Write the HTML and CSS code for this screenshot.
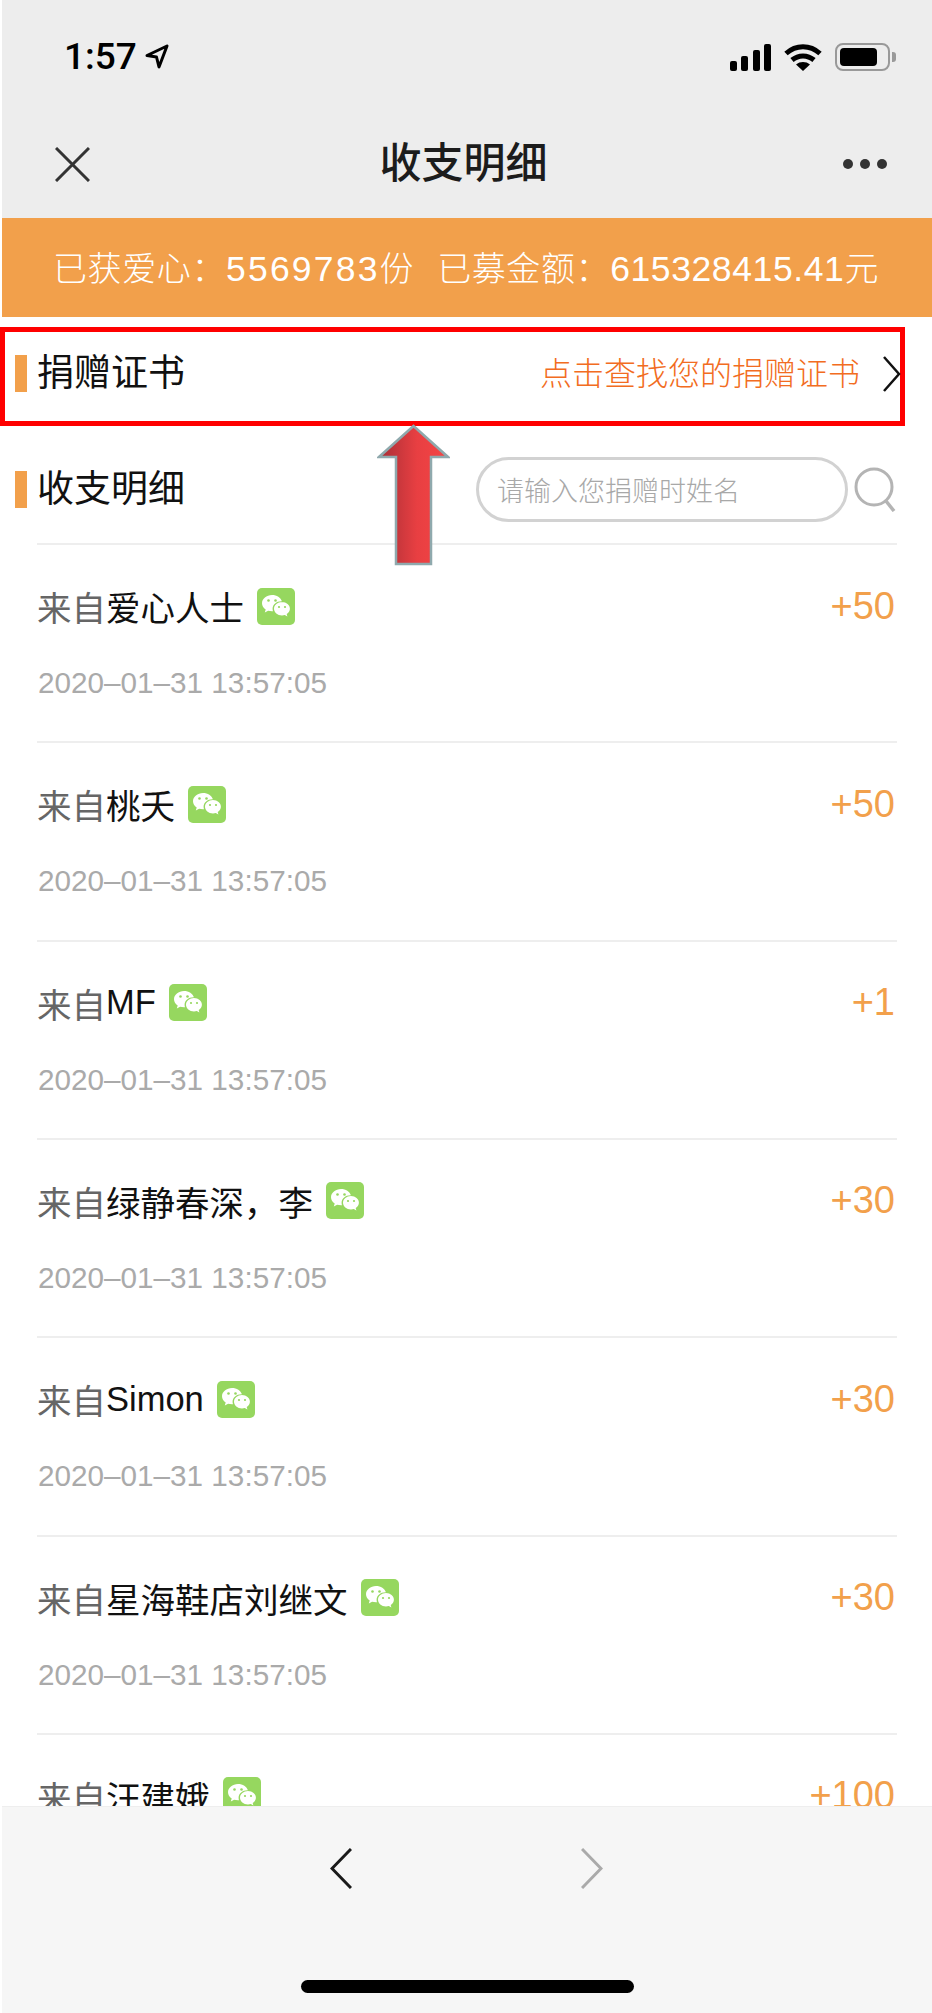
FILE: index.html
```html
<!DOCTYPE html>
<html lang="zh-CN">
<head>
  <meta charset="UTF-8">
  <meta name="viewport" content="width=device-width, initial-scale=1.0">
  <title>收支明细</title>
  <link rel="stylesheet" href="styles.css">
</head>

<body>
  <svg class="defs" width="0" height="0">
    <symbol id="wechat" viewBox="0 0 38 37">
      <rect width="38" height="37" rx="5" fill="#96d75f"/>
      <path d="M15 7c-5.500 0-10 3.700-10 8.200 0 2.600 1.400 4.800 3.700 6.300l-.9 2.900 3.300-1.700c1.200.3 2.500.5 3.900.5h1c-.3-.9-.4-1.700-.4-2.500 0-4.200 3.900-7.500 8.800-7.500h.5C23.800 9.700 19.800 7 15 7z" fill="#fff"/>
      <path d="M25 14c-4.400 0-8 3-8 6.700s3.600 6.700 8 6.700c1 0 1.900-.2 2.800-.4l2.600 1.400-.7-2.400c1.900-1.300 3.200-3.300 3.200-5.300 0-3.700-3.500-6.700-7.900-6.700z" fill="#fff"/>
      <g fill="#96d75f">
        <circle cx="11.500" cy="12.500" r="1.300"/>
        <circle cx="18.500" cy="12.500" r="1.300"/>
        <circle cx="22" cy="19" r="1.100"/>
        <circle cx="28" cy="19" r="1.100"/>
      </g>
    </symbol>
  </svg>

  <div class="page">
    <header class="top">
      <div class="status">
        <div class="clock">
          <span>1:57</span>
          <svg class="loc" width="24" height="25" viewBox="0 0 24 25"><path d="M22 2 2 11.500l9.500 1.500 2.500 10z" fill="none" stroke="#000" stroke-width="3" stroke-linejoin="round"/></svg>
        </div>
        <div class="status-icons">
          <svg width="41" height="27" viewBox="0 0 41 27">
            <rect x="0" y="17" width="7" height="10" rx="2"/>
            <rect x="11" y="12" width="7" height="15" rx="2"/>
            <rect x="23" y="6" width="7" height="21" rx="2"/>
            <rect x="34" y="0" width="7" height="27" rx="2"/>
          </svg>
          <svg width="38" height="27" viewBox="0 0 38 27">
            <path d="M2 9.500c10-9 24-9 34 0M8 16c6.500-5.500 15.500-5.500 22 0" fill="none" stroke="#000" stroke-width="5"/>
            <path d="M19 27 12 20.500c4-3.300 10-3.300 14 0z"/>
          </svg>
          <div class="battery"><div class="battery-fill"></div></div>
          <div class="battery-nub"></div>
        </div>
      </div>
      <nav class="nav">
        <svg class="nav-close" width="35" height="35" viewBox="0 0 35 35"><path d="M1 1l33 33M34 1 1 34" stroke="#333" stroke-width="3" fill="none"/></svg>
        <h1 class="nav-title">收支明细</h1>
        <div class="nav-more"><i></i><i></i><i></i></div>
      </nav>
    </header>

    <div class="banner">
      <span>已获爱心：<b class="num num-a">5569783</b>份</span>
      <span>已募金额：<b class="num">615328415.41</b>元</span>
    </div>

    <a class="cert">
      <span class="mark"></span>
      <span class="head-title">捐赠证书</span>
      <span class="cert-link">点击查找您的捐赠证书</span>
      <svg class="cert-arrow" width="18" height="36" viewBox="0 0 18 36"><path d="M1 1l15 17L1 35" fill="none" stroke="#111" stroke-width="2.500"/></svg>
    </a>

    <div class="list-head">
      <span class="mark"></span>
      <span class="head-title">收支明细</span>
      <div class="search-box">请输入您捐赠时姓名</div>
      <svg class="search-icon" width="42" height="45" viewBox="0 0 42 45">
        <circle cx="20" cy="20" r="18" fill="none" stroke="#b4b4b4" stroke-width="3"/>
        <path d="M32 34l8 10" stroke="#b4b4b4" stroke-width="3.500" fill="none"/>
      </svg>
    </div>

    <ul class="list">
      <li class="row">
        <div class="row-main">
          <span class="from">来自</span><span class="name">爱心人士</span>
          <svg class="wx"><use href="#wechat"/></svg>
          <span class="amount">+50</span>
        </div>
        <div class="date">2020–01–31 13:57:05</div>
      </li>
      <li class="row">
        <div class="row-main">
          <span class="from">来自</span><span class="name">桃夭</span>
          <svg class="wx"><use href="#wechat"/></svg>
          <span class="amount">+50</span>
        </div>
        <div class="date">2020–01–31 13:57:05</div>
      </li>
      <li class="row">
        <div class="row-main">
          <span class="from">来自</span><span class="name">MF</span>
          <svg class="wx"><use href="#wechat"/></svg>
          <span class="amount">+1</span>
        </div>
        <div class="date">2020–01–31 13:57:05</div>
      </li>
      <li class="row">
        <div class="row-main">
          <span class="from">来自</span><span class="name">绿静春深，李</span>
          <svg class="wx"><use href="#wechat"/></svg>
          <span class="amount">+30</span>
        </div>
        <div class="date">2020–01–31 13:57:05</div>
      </li>
      <li class="row">
        <div class="row-main">
          <span class="from">来自</span><span class="name">Simon</span>
          <svg class="wx"><use href="#wechat"/></svg>
          <span class="amount">+30</span>
        </div>
        <div class="date">2020–01–31 13:57:05</div>
      </li>
      <li class="row">
        <div class="row-main">
          <span class="from">来自</span><span class="name">星海鞋店刘继文</span>
          <svg class="wx"><use href="#wechat"/></svg>
          <span class="amount">+30</span>
        </div>
        <div class="date">2020–01–31 13:57:05</div>
      </li>
      <li class="row">
        <div class="row-main">
          <span class="from">来自</span><span class="name">汪建娥</span>
          <svg class="wx"><use href="#wechat"/></svg>
          <span class="amount">+100</span>
        </div>
        <div class="date">2020–01–31 13:57:05</div>
      </li>
    </ul>

    <footer class="toolbar">
      <div class="toolbar-btns">
        <svg width="22" height="41" viewBox="0 0 22 41"><path d="M21 1 2 20.500 21 40" fill="none" stroke="#1a1a1a" stroke-width="3"/></svg>
        <svg width="22" height="41" viewBox="0 0 22 41"><path d="M1 1l19 19.500L1 40" fill="none" stroke="#aaa" stroke-width="3"/></svg>
      </div>
      <div class="home-bar"></div>
    </footer>

    <!-- callout pointing up at the certificate row -->
    <svg class="callout" width="73" height="143" viewBox="0 0 73 143">
      <defs>
        <linearGradient id="calloutFill" x1="0" x2="1" y1="0" y2="0">
          <stop offset="0" stop-color="#a82f36"/>
          <stop offset=".55" stop-color="#e83f42"/>
          <stop offset="1" stop-color="#f54545"/>
        </linearGradient>
      </defs>
      <path d="M36.500 2 71 33H54v107H19V33H2z" fill="url(#calloutFill)" stroke="#8fa9ad" stroke-width="2.500"/>
    </svg>
  </div>
</body>

</html>
```

FILE: styles.css
```css
*{
  box-sizing: border-box;
}
html,body{
  margin: 0;
  padding: 0;
  background: #fff;
}
body{
  font-family: "Liberation Sans", "Noto Sans CJK SC", sans-serif;
}
.defs{
  display: block;
  height: 0;
}
.page{
  position: relative;
  width: 932px;
  height: 2013px;
  display: flex;
  flex-direction: column;
  overflow: hidden;
  background: #fff;
}

/* top bar */
.top{
  flex: none;
  height: 218px;
  margin-left: 2px;
  background: #ededed;
}
.status{
  height: 110px;
  padding: 43px 36px 0 62px;
  display: flex;
  justify-content: space-between;
  align-items: flex-start;
}
.clock{
  display: flex;
  align-items: center;
  gap: 8px;
  height: 27px;
  font-family: Roboto, "Liberation Sans", sans-serif;
  font-size: 37px;
  font-weight: 500;
  color: #000;
}
.status-icons{
  display: flex;
  align-items: center;
  gap: 13px;
}
.battery{
  width: 55px;
  height: 28px;
  padding: 3px;
  border: 2.500px solid #999;
  border-radius: 8px;
}
.battery-fill{
  width: 37px;
  height: 18px;
  background: #000;
  border-radius: 4px;
}
.battery-nub{
  width: 4px;
  height: 10px;
  margin-left: -11px;
  background: #999;
  border-radius: 0 3px 3px 0;
}
.nav{
  height: 108px;
  padding: 0 45px 0 53px;
  display: flex;
  align-items: center;
  justify-content: space-between;
}
.nav-title{
  margin: 0 0 0 -6px;
  font-size: 42px;
  font-weight: 500;
  line-height: 60px;
  color: #1c1c1c;
}
.nav-more{
  display: flex;
  gap: 7px;
}
.nav-more i{
  width: 10px;
  height: 10px;
  background: #333;
  border-radius: 50%;
}

/* summary banner */
.banner{
  flex: none;
  height: 99px;
  margin-left: 2px;
  padding: 0 53px 2px 51px;
  display: flex;
  align-items: center;
  justify-content: space-between;
  background: #f2a04b;
  color: #fff;
  font-size: 34px;
  letter-spacing: .6px;
  font-weight: 300;
}
.num{
  font-weight: 400;
  font-size: 35.500px;
}
.num-a{
  letter-spacing: 2.200px;
}

/* certificate row */
.cert{
  flex: none;
  width: 905px;
  height: 99px;
  margin-top: 10px;
  padding: 0 0 6px 10px;
  display: flex;
  align-items: center;
  border: 5.500px solid #f00;
  background: #fff;
}
.mark{
  flex: none;
  width: 12px;
  height: 37px;
  margin-right: 10px;
  background: #f2a04b;
}
.head-title{
  font-size: 37px;
  line-height: 44px;
  color: #111;
}
.cert-link{
  margin: 0 23px 0 auto;
  font-size: 32px;
  font-weight: 300;
  line-height: 44px;
  color: #f26c21;
}
.cert-arrow{
  flex: none;
  margin-right: -1px;
}

/* list header with search */
.list-head{
  flex: none;
  height: 117px;
  padding: 10px 0 0 15px;
  display: flex;
  align-items: center;
}
.search-box{
  width: 372px;
  height: 65px;
  margin-left: 291px;
  padding-left: 18px;
  display: flex;
  align-items: center;
  border: 3px solid #d2d2d2;
  border-radius: 33px;
  font-size: 27px;
  font-weight: 300;
  color: #a8a8a8;
}
.search-icon{
  flex: none;
  margin-left: 6px;
}

/* list */
.list{
  flex: 1;
  min-height: 0;
  overflow: hidden;
  margin: 0 35px 0 37px;
  padding: 0;
  list-style: none;
}
.row{
  height: 198.330px;
  border-top: 2px solid #eee;
  padding-top: 36px;
}
.row-main{
  display: flex;
  align-items: center;
  height: 50px;
  padding-left: 0;
  font-size: 34.500px;
}
.from{
  color: #666;
}
.name{
  color: #111;
}
.wx{
  flex: none;
  width: 38px;
  height: 37px;
  margin: 0 0 0 13px;
}
.amount{
  margin-left: auto;
  margin-right: 2px;
  font-size: 38px;
  font-weight: 300;
  color: #f2a04b;
}
.date{
  margin-top: 32px;
  padding-left: 1px;
  font-size: 29.700px;
  line-height: 40px;
  color: #aaa;
}

/* bottom toolbar */
.toolbar{
  flex: none;
  height: 207px;
  margin-left: 2px;
  padding-top: 41px;
  background: #f6f6f6;
  border-top: 1px solid #eee;
}
.toolbar-btns{
  display: flex;
  gap: 229px;
  padding-left: 328px;
}
.home-bar{
  width: 333px;
  height: 13px;
  margin: 91px 0 0 299px;
  background: #000;
  border-radius: 7px;
}

.callout{
  position: absolute;
  left: 377px;
  top: 424px;
}
```
